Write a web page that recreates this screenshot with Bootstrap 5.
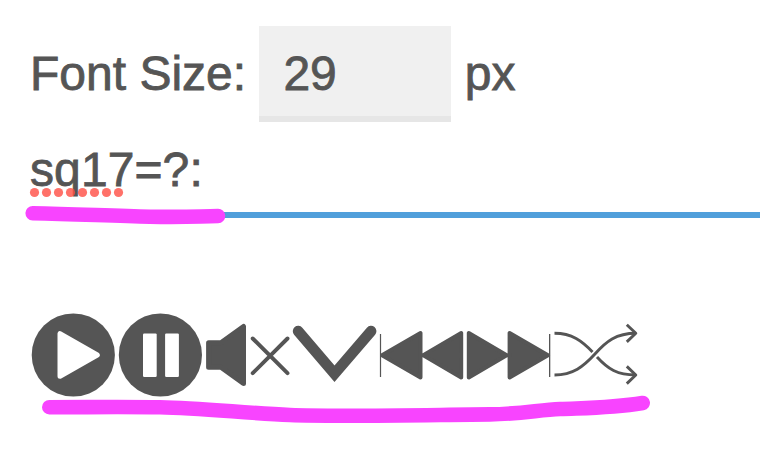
<!DOCTYPE html>
<html lang="en">
<head>
<meta charset="utf-8">
<meta name="viewport" content="width=device-width, initial-scale=1">
<title>Player settings</title>
<link href="https://cdn.jsdelivr.net/npm/bootstrap@5.3.0/dist/css/bootstrap.min.css" rel="stylesheet">
<style>
body{font-family:"Liberation Sans",Arial,sans-serif;font-size:48px;line-height:96px;color:#555;background:#fff;overflow:hidden}
.player{padding:26px 0 0 30px;height:458px}
.size-row{gap:13.3px;height:96px}
.size-row .form-control{width:192px;height:96px;padding:4px 24px 0;font-size:48px;line-height:86px;color:#555;background:#f0f0f0;border-bottom:6px solid #e6e6e6!important;-webkit-text-stroke:.8px #555}
.size-row label,.size-row span,.query{-webkit-text-stroke:.8px #555}
.query{height:96px;letter-spacing:.1px;border-bottom:6px solid #509fdb}
.icons{margin-top:92px;height:90px}
.icons svg{display:block;flex:none;fill:#555;stroke:#555;stroke-width:0}
.icons .line{fill:none;stroke-linecap:round}
.icons .cut{fill:#fff;stroke:#fff;stroke-linejoin:round}
.icons .tri{stroke-width:4;stroke-linejoin:round}
.marker{fill:none;stroke:#f844ff;stroke-width:14.6;stroke-linecap:round;stroke-linejoin:round}
.spell{fill:#ff4d44;fill-opacity:.8}
</style>
<script src="https://cdn.jsdelivr.net/npm/bootstrap@5.3.0/dist/js/bootstrap.bundle.min.js"></script>
</head>
<body>
<main class="player position-relative">
  <div class="size-row d-flex align-items-center">
    <label for="size">Font Size:</label>
    <input id="size" class="form-control border-0 rounded-0 shadow-none" type="text" value="29">
    <span>px</span>
  </div>
  <div class="query" spellcheck="false">sq17=?:</div>
  <div class="icons d-flex">
    <svg width="87" height="90" viewBox="30 310 87 90" aria-label="Play"><circle cx="73.3" cy="355" r="41.6"/><path class="cut" stroke-width="5" d="M60 333.7V376.3L97.3 355Z"/></svg>
    <svg width="87" height="90" viewBox="117 310 87 90" aria-label="Pause"><circle cx="160.4" cy="355" r="41.6"/><g class="cut" stroke-width="0"><rect x="143" y="333.4" width="13.7" height="43.6" rx="1.2"/><rect x="165.1" y="333.4" width="13.8" height="43.6" rx="1.2"/></g></svg>
    <svg width="88" height="90" viewBox="204 310 88 90" aria-label="Mute"><path stroke-width="5" stroke-linejoin="round" d="M208.6 342.7H220.9L243.5 326.5V383.5L220.9 367.2H208.6Z"/><path class="line" stroke-width="3.9" d="M252.7 338.5L287.5 373.2M287.5 338.5L252.7 373.2"/></svg>
    <svg width="86" height="90" viewBox="292 310 86 90" aria-label="Down"><path class="line" stroke-width="10.8" d="M298.2 331.2L334.5 373.7L371 331.2"/></svg>
    <svg width="87" height="90" viewBox="378 310 87 90" aria-label="Previous"><rect x="379.9" y="334" width="1.2" height="43"/><path class="tri" d="M382 355.3L420.5 333V377.5ZM423.3 355.3L461.2 333V377.5Z"/></svg>
    <svg width="87" height="90" viewBox="465 310 87 90" aria-label="Next"><path class="tri" d="M468.8 333V377.5L506.7 355.3ZM509.6 333V377.5L548 355.3Z"/><rect x="549" y="334" width="1.3" height="43"/></svg>
    <svg width="90" height="90" viewBox="552 310 90 90" aria-label="Shuffle"><g class="line" stroke-width="2.9"><path stroke-linecap="butt" d="M554.5 333.3C572 333.3 582 341 592.5 352M597 357C608 369 617 375 636 375M554.5 375C573 375 583.5 366.5 594.7 354.3C606 341.5 616 333.3 636 333.3"/><path stroke-linecap="butt" stroke-linejoin="round" d="M626.8 324.7L635.8 333.3L626.8 341.9M626.8 366.4L635.8 375L626.8 383.6"/></g></svg>
  </div>
  <svg class="position-absolute top-0 start-0 pe-none" width="760" height="458" aria-hidden="true">
    <g class="spell"><circle cx="34.5" cy="192.5" r="4.6"/><circle cx="46.5" cy="192.5" r="4.6"/><circle cx="58.5" cy="192.5" r="4.6"/><circle cx="70.5" cy="192.5" r="4.6"/><circle cx="82.5" cy="192.5" r="4.6"/><circle cx="94.5" cy="192.5" r="4.6"/><circle cx="106.5" cy="192.5" r="4.6"/><circle cx="118.5" cy="192.5" r="4.6"/></g>
    <path class="marker" d="M32.7 213.2C75 213.9 112 216 150 216.7S195 216.4 218 216"/>
    <path class="marker" d="M49.3 407.2C90 407.2 125 406.7 160 407.3C200 408 245 413 290 415C340 417 440 414.7 490 414.4C520 414 540 409.8 560 409C590 407.8 612 408 642.7 403"/>
  </svg>
</main>
</body>
</html>
